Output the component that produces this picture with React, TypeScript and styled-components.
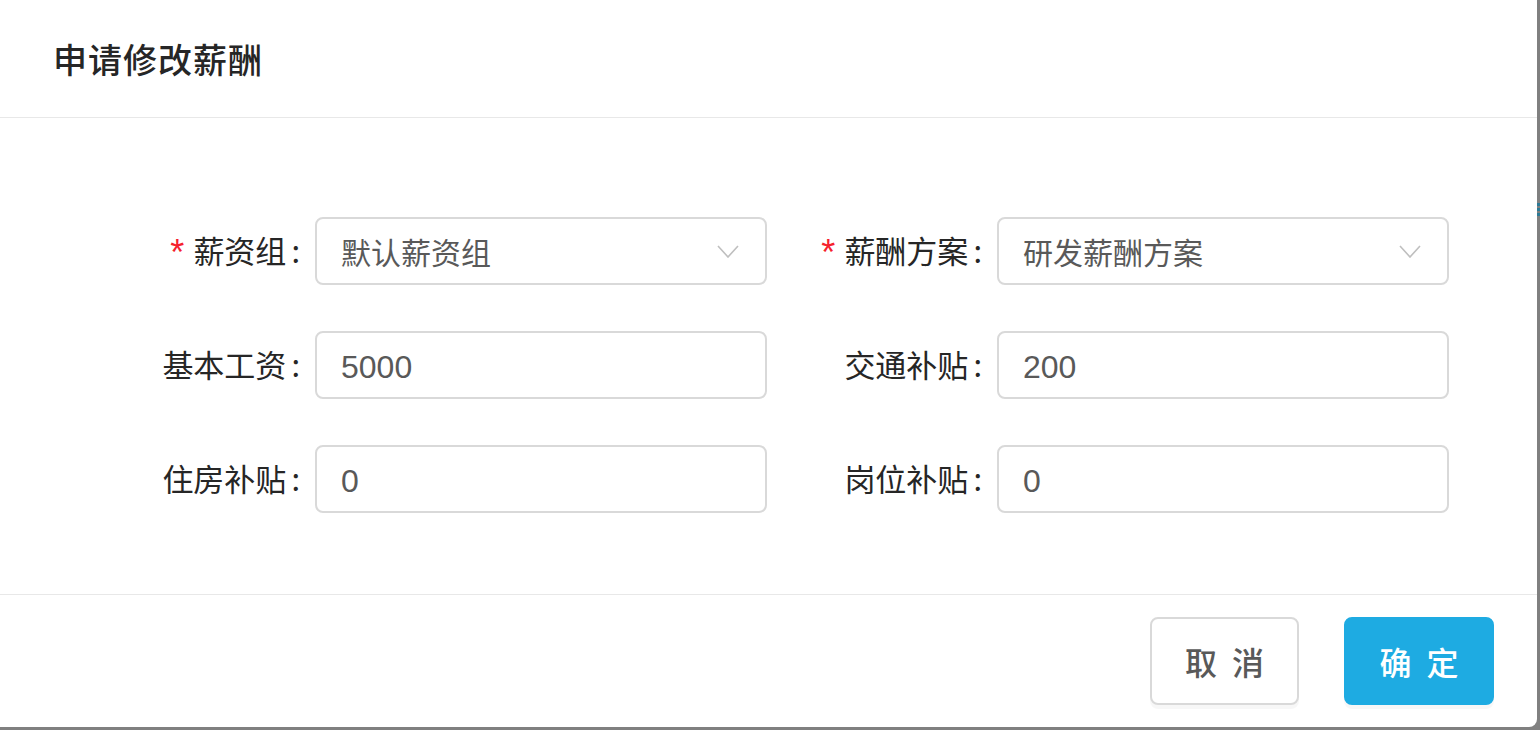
import React from 'react'
import styled, { createGlobalStyle } from 'styled-components'

const GlobalStyle = createGlobalStyle`
  html, body {
    margin: 0;
    padding: 0;
    background: #808080;
    font-family: "Noto Sans CJK SC", "Noto Sans", sans-serif;
  }
`

const Mask = styled.div`
  position: relative;
  width: 1540px;
  height: 730px;
  overflow: hidden;
  background: #808080;
`

// bit of the page underneath peeking out at the right edge
const PeekMark = styled.div`
  position: absolute;
  right: 0;
  top: 203px;
  width: 3px;
  height: 15px;
  background: repeating-linear-gradient(
    to bottom,
    #2b7a96 0,
    #2b7a96 3px,
    #808080 3px,
    #808080 5px
  );
`

const Dialog = styled.div`
  width: 1537px;
  height: 727px;
  background: #fff;
  border-bottom-right-radius: 8px;
  display: flex;
  flex-direction: column;
`

const Header = styled.div`
  height: 117px;
  flex-shrink: 0;
  display: flex;
  align-items: center;
  padding-left: 53px;
  border-bottom: 1px solid #e8e8e8;
  box-sizing: content-box;
`

const Title = styled.h2`
  margin: 0;
  font-size: 34px;
  font-weight: 500;
  color: #262626;
  letter-spacing: 1px;
`

const Body = styled.div`
  flex: 1;
  padding: 99px 0 0;
`

const FormGrid = styled.div`
  display: grid;
  grid-template-columns: 315px 452px 230px 452px;
  row-gap: 46px;
  align-items: center;
`

const Label = styled.label`
  display: flex;
  justify-content: flex-end;
  align-items: center;
  padding-right: 15px;
  font-size: 31px;
  color: #262626;
  white-space: nowrap;
  position: relative;
  top: -2px;
`

const Required = styled.span`
  color: #f5222d;
  font-family: "Liberation Sans", sans-serif;
  font-size: 36px;
  margin-right: 9px;
  position: relative;
  top: 4px;
`

const Colon = styled.span`
  margin-left: 5px;
`

const Field = styled.div`
  height: 68px;
  box-sizing: border-box;
  border: 2px solid #d9d9d9;
  border-radius: 8px;
  display: flex;
  align-items: center;
  justify-content: space-between;
  padding: 0 26px 0 24px;
  font-size: 30px;
  color: #595959;
`

const NumberValue = styled.span`
  font-family: "Liberation Sans", "Noto Sans CJK SC", sans-serif;
  font-size: 32px;
  position: relative;
  top: 2px;
`

const Chevron = styled.svg`
  width: 22px;
  height: 13px;
  flex-shrink: 0;
`

const Footer = styled.div`
  height: 132px;
  flex-shrink: 0;
  border-top: 1px solid #e8e8e8;
  display: flex;
  justify-content: flex-end;
  align-items: center;
  gap: 45px;
  padding-right: 43px;
`

const Button = styled.button<{ $primary?: boolean }>`
  width: ${p => (p.$primary ? 150 : 149)}px;
  height: 88px;
  box-sizing: border-box;
  border-radius: 8px;
  border: 2px solid ${p => (p.$primary ? '#1eabe2' : '#d9d9d9')};
  background: ${p => (p.$primary ? '#1eabe2' : '#fff')};
  color: ${p => (p.$primary ? '#fff' : '#595959')};
  font-family: "Noto Sans CJK SC", sans-serif;
  font-size: 32px;
  font-weight: 500;
  letter-spacing: 4px;
  box-shadow: 0 4px 0 rgba(0, 0, 0, 0.03);
  cursor: pointer;
  padding: 0 0 0 4px;
`

const ArrowDown = () => (
  <Chevron viewBox="0 0 22 13">
    <polyline points="1,1 11,12 21,1" fill="none" stroke="#bfbfbf" strokeWidth="1.6" />
  </Chevron>
)

type FieldDef = { label: string; value: string; required?: boolean; select?: boolean }

const fields: FieldDef[] = [
  { label: '薪资组', value: '默认薪资组', required: true, select: true },
  { label: '薪酬方案', value: '研发薪酬方案', required: true, select: true },
  { label: '基本工资', value: '5000' },
  { label: '交通补贴', value: '200' },
  { label: '住房补贴', value: '0' },
  { label: '岗位补贴', value: '0' },
]

export default function App() {
  return (
    <>
      <GlobalStyle />
      <Mask>
        <Dialog>
          <Header>
            <Title>申请修改薪酬</Title>
          </Header>
          <Body>
            <FormGrid>
              {fields.map(f => (
                <React.Fragment key={f.label}>
                  <Label>
                    {f.required && <Required>*</Required>}
                    {f.label}
                    <Colon>:</Colon>
                  </Label>
                  <Field>
                    {f.select ? <span>{f.value}</span> : <NumberValue>{f.value}</NumberValue>}
                    {f.select && <ArrowDown />}
                  </Field>
                </React.Fragment>
              ))}
            </FormGrid>
          </Body>
          <Footer>
            <Button>取 消</Button>
            <Button $primary>确 定</Button>
          </Footer>
        </Dialog>
        <PeekMark />
      </Mask>
    </>
  )
}
